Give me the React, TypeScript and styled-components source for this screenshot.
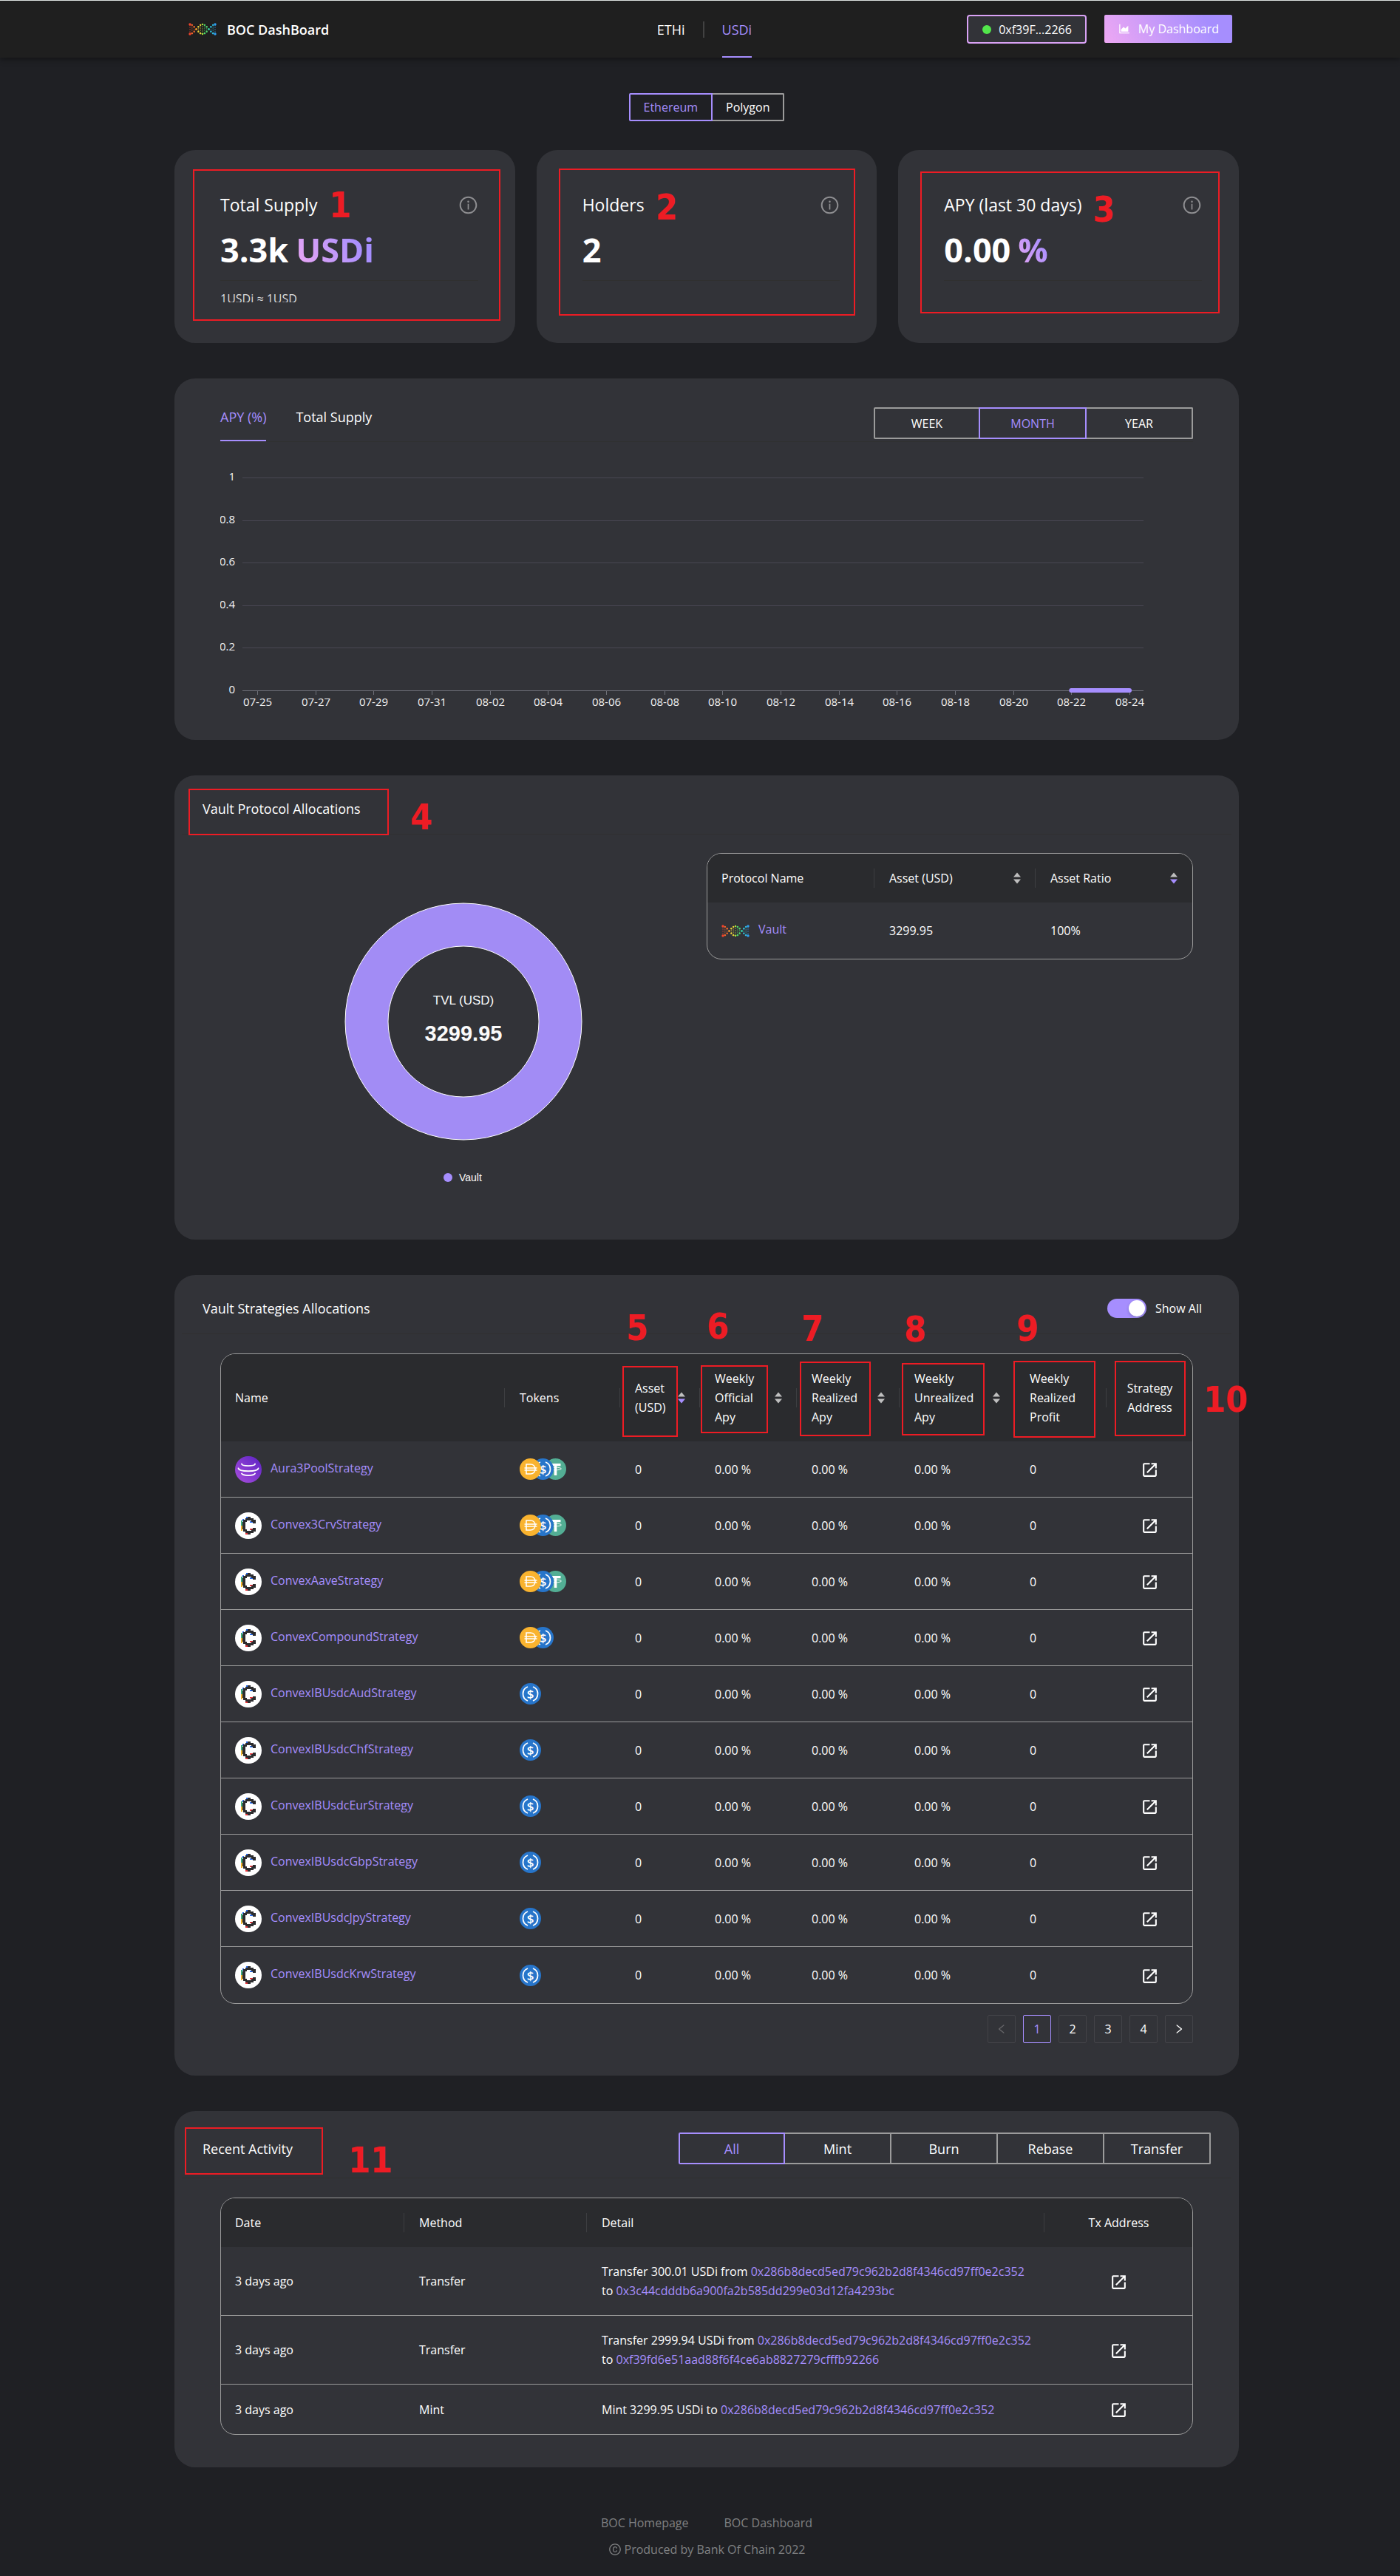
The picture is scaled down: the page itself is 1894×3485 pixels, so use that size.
import React from "react";
import styled, { createGlobalStyle, css } from "styled-components";
import {
  AiOutlineAreaChart,
  AiOutlineCopyright,
  AiOutlineInfoCircle,
  AiOutlineLeft,
  AiOutlineRight,
} from "react-icons/ai";
import { MdOpenInNew } from "react-icons/md";

const color = {
  page: "#1f2024",
  header: "#1f1f1f",
  panel: "#323338",
  tableHead: "#2a2b2e",
  rule: "#303030",
  line: "#9b9b9b",
  text: "#ffffff",
  muted: "#7f8082",
  accent: "#a68efe",
  pink: "#eea8f3",
  callout: "#ed1c24",
};

const GlobalStyle = createGlobalStyle`
  * { box-sizing: border-box; }
  body {
    margin: 0;
    background: ${color.page};
    color: ${color.text};
    font-family: "Open Sans", "Noto Sans", sans-serif;
    font-size: 16px;
    line-height: 26px;
  }
  a { color: inherit; text-decoration: none; }
  button { font: inherit; color: inherit; cursor: pointer; }
  h1, h2, p { margin: 0; font-weight: 400; }
`;

/* ---------- header ---------- */

const TopBar = styled.header`
  background: ${color.header};
  border-top: 1px solid #dde1e0;
  box-shadow: 0 2px 8px rgba(0, 0, 0, 0.45);
`;

const TopBarInner = styled.div`
  display: grid;
  grid-template-columns: 1fr auto 1fr;
  align-items: center;
  max-width: 1440px;
  height: 77px;
  margin: 0 auto;
  padding-left: 28px;
`;

const Brand = styled.a`
  display: flex;
  align-items: center;
  gap: 14px;
  font-size: 18px;
  font-weight: 600;
`;

const Nav = styled.nav`
  display: flex;
  align-items: center;
  height: 100%;
  padding-right: 16px;
  font-size: 18px;
`;

const NavLink = styled.a<{ $active?: boolean }>`
  display: flex;
  align-items: center;
  height: 100%;
  color: ${(p) => (p.$active ? color.accent : color.text)};
  border-top: 2px solid transparent;
  border-bottom: 2px solid ${(p) => (p.$active ? color.accent : "transparent")};
`;

const NavDivider = styled.span`
  width: 2px;
  height: 22px;
  margin: 0 24px;
  background: #424242;
`;

const TopActions = styled.div`
  display: flex;
  justify-content: flex-end;
  gap: 24px;
`;

const WalletButton = styled.button`
  display: flex;
  align-items: center;
  gap: 10px;
  height: 39px;
  padding: 0 18px 0 19px;
  border: 2px solid #d9a2f5;
  border-radius: 4px;
  background: ${color.panel};
`;

const OnlineDot = styled.span`
  width: 12px;
  height: 12px;
  border-radius: 50%;
  background: #52e64b;
`;

const DashboardButton = styled.button`
  display: flex;
  align-items: center;
  gap: 10px;
  height: 38px;
  padding: 0 18px;
  border: 0;
  border-radius: 2px;
  background: linear-gradient(60deg, ${color.pink}, ${color.accent} 80%);
`;

/* ---------- layout ---------- */

const Main = styled.main`
  padding-left: 18px;
`;

const Content = styled.div`
  display: flex;
  flex-direction: column;
  gap: 48px;
  max-width: 1440px;
  margin: 0 auto;
`;

const NetworkRow = styled.div`
  display: flex;
  justify-content: center;
  padding: 48px 0 39px;
`;

const Segments = styled.div`
  display: flex;
`;

const Segment = styled.button<{ $active?: boolean; $wide?: boolean }>`
  height: ${(p) => (p.$wide ? 43 : 38)}px;
  padding: 0 18px;
  ${(p) => p.$wide && "width: 144px;"}
  background: transparent;
  border: 2px solid ${color.line};
  border-left-width: 0;
  &:first-child {
    border-left-width: 2px;
    border-radius: 2px 0 0 2px;
  }
  &:last-child {
    border-radius: 0 2px 2px 0;
  }
  ${(p) =>
    p.$active &&
    css`
      color: ${color.accent};
      border-color: ${color.accent};
      &:not(:first-child) {
        box-shadow: -2px 0 0 ${color.accent};
      }
    `}
`;

const Panel = styled.section`
  position: relative;
  padding: 10px;
  border-radius: 28px;
  background: ${color.panel};
`;

const PanelHead = styled.div`
  display: flex;
  align-items: center;
  justify-content: space-between;
  min-height: 70px;
  padding: 19px 28px 18px;
  border-bottom: 1px solid ${color.rule};
  font-size: 18px;
`;

const PanelTitle = styled.h2`
  font-size: 18px;
`;

const PanelBody = styled.div`
  padding: 26px 52px 34px;
`;

/* ---------- stat cards ---------- */

const Stats = styled.div`
  display: grid;
  grid-template-columns: repeat(3, 1fr);
  gap: 29px;
`;

const StatCard = styled.section`
  position: relative;
  padding: 56px 50px 55px 62px;
  border-radius: 28px;
  background: ${color.panel};
`;

const StatHead = styled.div`
  display: flex;
  align-items: center;
  justify-content: space-between;
  line-height: 36px;
`;

const StatTitle = styled.h2`
  font-size: 23px;
`;

const InfoIcon = styled(AiOutlineInfoCircle)`
  width: 27px;
  height: 27px;
  color: #8f8f92;
`;

const StatValue = styled.p`
  display: flex;
  gap: 10px;
  padding: 12px 0 10px;
  border-bottom: 1px solid ${color.rule};
  font-size: 45px;
  font-weight: 700;
  line-height: 62px;
`;

const StatUnit = styled.span`
  color: transparent;
  background: linear-gradient(60deg, ${color.pink}, ${color.accent} 80%);
  background-clip: text;
`;

const StatNote = styled.p`
  height: 22px;
  margin-top: 7px;
  overflow: hidden;
  color: #dcdcdd;
  line-height: 34px;
`;

/* ---------- chart ---------- */

const ChartPanel = styled.section`
  padding: 39px 62px 37px;
  border-radius: 28px;
  background: ${color.panel};
`;

const ChartTabs = styled.div`
  display: flex;
  align-items: flex-start;
  gap: 40px;
  border-bottom: 1px solid ${color.rule};
  font-size: 18px;
`;

const ChartTab = styled.button<{ $active?: boolean }>`
  height: 46px;
  padding: 0 0 18px;
  border: 0;
  border-bottom: 2px solid ${(p) => (p.$active ? color.accent : "transparent")};
  background: transparent;
  color: ${(p) => (p.$active ? color.accent : color.text)};
`;

const PushRight = styled.div`
  margin-left: auto;
  font-size: 16px;
`;

const ChartSpace = styled.div`
  padding-top: 20px;
`;

const Drawing = styled.svg`
  display: block;
  width: 100%;
  height: auto;
`;

const AxisText = styled.text`
  font-size: 15px;
  fill: #f2f2f2;
`;

/* ---------- tables ---------- */

const TableFrame = styled.div`
  align-self: start;
  overflow: hidden;
  border: 1px solid ${color.line};
  border-radius: 20px;
`;

const Table = styled.table`
  width: 100%;
  table-layout: fixed;
  border-collapse: separate;
  border-spacing: 0;
`;

const HeadCell = styled.th<{ $center?: boolean }>`
  position: relative;
  padding: 20px 19px 20px 20px;
  background: ${color.tableHead};
  font-weight: 400;
  text-align: ${(p) => (p.$center ? "center" : "left")};
  &:first-child {
    padding-left: 19px;
  }
  &:not(:last-child)::after {
    content: "";
    position: absolute;
    top: calc(50% - 13px);
    right: 0;
    width: 1px;
    height: 26px;
    background: #3d3e41;
  }
`;

const HeadFlex = styled.div`
  display: flex;
  align-items: center;
  justify-content: space-between;
`;

const SortButton = styled.button`
  display: flex;
  padding: 0;
  border: 0;
  background: none;
`;

const Cell = styled.td<{ $center?: boolean }>`
  padding: 20px ${(p) => (p.$center ? 19 : 10)}px 20px 20px;
  border-bottom: 1px solid ${color.line};
  text-align: ${(p) => (p.$center ? "center" : "left")};
  &:first-child {
    padding-left: 19px;
  }
  tr:last-child > & {
    border-bottom: 0;
  }
`;

const TallRow = styled.tr`
  height: 76px;
  & > td {
    padding-top: 16px;
    padding-bottom: 16px;
  }
`;

const Named = styled.span`
  display: flex;
  align-items: center;
  gap: 12px;
`;

const NameLink = styled.a`
  padding-bottom: 4px;
  color: ${color.accent};
`;

const Address = styled.a`
  color: ${color.accent};
`;

const TokenStack = styled.span`
  display: flex;
  isolation: isolate;
  & > svg {
    position: relative;
  }
  & > svg + svg {
    margin-left: -12px;
  }
  & > svg:nth-child(1) {
    z-index: 3;
  }
  & > svg:nth-child(2) {
    z-index: 2;
  }
`;

const IconLink = styled.a`
  display: inline-flex;
  vertical-align: middle;
`;

const Allocation = styled.div`
  display: grid;
  grid-template-columns: 1fr 1fr;
  padding: 25px 52px 53px;
`;

const DonutBox = styled.figure`
  width: 340px;
  margin: 0 auto;
`;

const DonutText = styled.text<{ $size: number; $bold?: boolean }>`
  font-family: "Liberation Sans", sans-serif;
  font-size: ${(p) => p.$size}px;
  font-weight: ${(p) => (p.$bold ? 700 : 400)};
  fill: #fafafa;
`;

const SwitchLabel = styled.label`
  display: flex;
  align-items: center;
  gap: 12px;
  padding-right: 12px;
  font-size: 16px;
`;

const Switch = styled.input`
  appearance: none;
  position: relative;
  width: 53px;
  height: 26px;
  margin: 0;
  border-radius: 13px;
  background: #6b6b6f;
  &::before {
    content: "";
    position: absolute;
    top: 2px;
    left: 2px;
    width: 22px;
    height: 22px;
    border-radius: 50%;
    background: #ffffff;
    box-shadow: 0 2px 4px rgba(0, 35, 11, 0.2);
  }
  &:checked {
    background: ${color.accent};
  }
  &:checked::before {
    left: 29px;
  }
`;

const Pager = styled.nav`
  display: flex;
  justify-content: flex-end;
  gap: 10px;
  padding-top: 15px;
`;

const PageButton = styled.button<{ $active?: boolean }>`
  display: flex;
  align-items: center;
  justify-content: center;
  width: 38px;
  height: 38px;
  padding: 0;
  border: 1px solid ${(p) => (p.$active ? color.accent : "#434348")};
  border-radius: 2px;
  background: transparent;
  color: ${(p) => (p.$active ? color.accent : color.text)};
  &:disabled {
    color: #68686b;
  }
`;

const Footer = styled.footer`
  display: flex;
  flex-direction: column;
  align-items: center;
  gap: 10px;
  padding: 14px 0 24px;
  color: ${color.muted};
`;

const FooterLinks = styled.div`
  display: flex;
  gap: 48px;
`;

const Copyright = styled.p`
  display: flex;
  align-items: center;
  gap: 4px;
`;

/* ---------- callouts drawn over the panels ---------- */

const CalloutBox = styled.span<{ $x: number; $y: number; $w: number; $h: number }>`
  position: absolute;
  left: ${(p) => p.$x}px;
  top: ${(p) => p.$y}px;
  width: ${(p) => p.$w}px;
  height: ${(p) => p.$h}px;
  border: 2px solid ${color.callout};
  pointer-events: none;
`;

const CalloutNumber = styled.span<{ $x: number; $y: number }>`
  position: absolute;
  left: ${(p) => p.$x}px;
  top: ${(p) => p.$y}px;
  color: ${color.callout};
  font-family: "DejaVu Sans Condensed", "DejaVu Sans", sans-serif;
  font-size: 48px;
  font-weight: 700;
  line-height: 48px;
  pointer-events: none;
`;

type CalloutData = { n: number; box: [number, number, number, number]; at: [number, number] };

function Callout({ n, box, at }: CalloutData) {
  return (
    <>
      <CalloutBox $x={box[0]} $y={box[1]} $w={box[2]} $h={box[3]} />
      <CalloutNumber $x={at[0]} $y={at[1]}>
        {n}
      </CalloutNumber>
    </>
  );
}

/* ---------- drawings ---------- */

const helixColors = ["#f0432b", "#f2662b", "#f39a2e", "#e8d23a", "#a5e23c", "#4fd96b", "#35d3a8", "#2fc0e0", "#2f9df0"];

function HelixLogo() {
  const dots: React.ReactNode[] = [];
  const count = 13;
  for (let i = 0; i < count; i++) {
    const t = i / (count - 1);
    const x = 2 + t * 34;
    const dy = Math.cos(t * Math.PI * 2) * 6.5;
    const fill = helixColors[Math.round(t * 8)];
    const r = i === 0 || i === count - 1 ? 1.7 : 1.2;
    if (Math.abs(dy) > 3) {
      dots.push(
        <path key={"c" + i} d={`M${x} ${8.5 - dy}V${8.5 + dy}`} stroke={fill} strokeOpacity="0.6" strokeDasharray="2 1" />
      );
    }
    dots.push(<circle key={"a" + i} cx={x} cy={8.5 - dy} r={r} fill={fill} />);
    dots.push(<circle key={"b" + i} cx={x} cy={8.5 + dy} r={r} fill={fill} />);
  }
  return (
    <svg width="38" height="17" viewBox="0 0 38 17" aria-hidden="true">
      {dots}
    </svg>
  );
}

function AuraLogo() {
  return (
    <svg width="36" height="36" viewBox="0 0 36 36" aria-hidden="true">
      <defs>
        <linearGradient id="aura" x1="1" y1="0" x2="0" y2="1">
          <stop offset="0" stopColor="#5b22c4" />
          <stop offset="1" stopColor="#a94fdc" />
        </linearGradient>
      </defs>
      <circle cx="18" cy="18" r="18" fill="url(#aura)" />
      <g fill="none" stroke="#ffffff" strokeWidth="1.8" strokeLinecap="round">
        <path d="M9 10.5c0 3.4 18 3.4 18 0" />
        <path d="M4.500 16.500c1 5 26 5 27 0" />
        <path d="M9 23.500c2 3.400 16 3.400 18 0" />
      </g>
    </svg>
  );
}

function ConvexLogo() {
  return (
    <svg width="36" height="36" viewBox="0 0 36 36" aria-hidden="true">
      <circle cx="18" cy="18" r="18" fill="#ffffff" />
      <g fill="none" strokeWidth="2">
        <path d="M9 11v7" stroke="#3fae7d" />
        <path d="M9 18v7" stroke="#f2b52c" />
        <path d="M11 9v3M15 7h3" stroke="#2a6ff0" />
        <path d="M20 13h4" stroke="#2a6ff0" />
        <path d="M20 23h4M14 29h3" stroke="#e8383d" />
      </g>
      <path
        d="M14 8h3V6h4v2h4v2h3v5h-4v-2h-2v-2h-6v2h-2v10h2v2h6v-2h2v-2h4v5h-3v2h-4v2h-4v-2h-3v-2h-3v-3h-1V13h1v-3h3z"
        fill="#2c2c2e"
      />
    </svg>
  );
}

const CoinSign = styled.text`
  font-family: "Open Sans", sans-serif;
  font-size: 17px;
  font-weight: 600;
  fill: #ffffff;
`;

function Coin({ kind }: { kind: "dai" | "usdc" | "usdt" }) {
  const fill = { dai: "#f9b32f", usdc: "#2775ca", usdt: "#53ae94" }[kind];
  return (
    <svg width="29" height="29" viewBox="0 0 29 29" aria-hidden="true">
      <circle cx="14.500" cy="14.500" r="14.500" fill={fill} />
      {kind === "dai" && (
        <path
          d="M9 8h5.500c4 0 6.500 2.700 6.500 6.500S18.500 21 14.500 21H9zM6.500 13h17M6.500 16h17"
          fill="none"
          stroke="#ffffff"
          strokeWidth="1.600"
        />
      )}
      {kind === "usdc" && (
        <>
          <path
            d="M11 5a10.200 10.200 0 0 0 0 19M18 5a10.200 10.200 0 0 1 0 19"
            fill="none"
            stroke="#ffffff"
            strokeWidth="1.800"
          />
          <CoinSign x="14.500" y="20.500" textAnchor="middle">
            $
          </CoinSign>
        </>
      )}
      {kind === "usdt" && (
        <>
          <path d="M7.500 7h14v3.200h-5.200V23h-3.600V10.200H7.500z" fill="#ffffff" />
          <ellipse cx="14.500" cy="14" rx="8" ry="1.800" fill="none" stroke="#ffffff" strokeWidth="0.900" />
        </>
      )}
    </svg>
  );
}

function Sorter({ down, label }: { down?: boolean; label: string }) {
  return (
    <SortButton type="button" aria-label={"Sort by " + label}>
      <svg width="12" height="16" viewBox="0 0 12 16" aria-hidden="true">
        <path d="M6 0.500L11 6.500H1z" fill="#bfbfbf" />
        <path d="M6 15.500L11 9.500H1z" fill={down ? color.accent : "#bfbfbf"} />
      </svg>
    </SortButton>
  );
}

function OpenLink({ label }: { label: string }) {
  return (
    <IconLink href="#" aria-label={label}>
      <MdOpenInNew size={25} />
    </IconLink>
  );
}

/* ---------- data ---------- */

const days = [
  "07-25", "07-27", "07-29", "07-31", "08-02", "08-04", "08-06", "08-08",
  "08-10", "08-12", "08-14", "08-16", "08-18", "08-20", "08-22", "08-24",
];

type Token = "dai" | "usdc" | "usdt";
const strategies: { name: string; aura?: boolean; tokens: Token[] }[] = [
  { name: "Aura3PoolStrategy", aura: true, tokens: ["dai", "usdc", "usdt"] },
  { name: "Convex3CrvStrategy", tokens: ["dai", "usdc", "usdt"] },
  { name: "ConvexAaveStrategy", tokens: ["dai", "usdc", "usdt"] },
  { name: "ConvexCompoundStrategy", tokens: ["dai", "usdc"] },
  { name: "ConvexIBUsdcAudStrategy", tokens: ["usdc"] },
  { name: "ConvexIBUsdcChfStrategy", tokens: ["usdc"] },
  { name: "ConvexIBUsdcEurStrategy", tokens: ["usdc"] },
  { name: "ConvexIBUsdcGbpStrategy", tokens: ["usdc"] },
  { name: "ConvexIBUsdcJpyStrategy", tokens: ["usdc"] },
  { name: "ConvexIBUsdcKrwStrategy", tokens: ["usdc"] },
];

const strategyColumns: { title: string; width: number; sort?: boolean; down?: boolean; center?: boolean }[] = [
  { title: "Name", width: 384 },
  { title: "Tokens", width: 156 },
  { title: "Asset (USD)", width: 108, sort: true, down: true },
  { title: "Weekly Official Apy", width: 131, sort: true },
  { title: "Weekly Realized Apy", width: 139, sort: true },
  { title: "Weekly Unrealized Apy", width: 156, sort: true },
  { title: "Weekly Realized Profit", width: 124 },
  { title: "Strategy Address", width: 116, center: true },
];

const ALICE = "0x286b8decd5ed79c962b2d8f4346cd97ff0e2c352";
const activity = [
  { method: "Transfer", amount: "300.01", from: ALICE, to: "0x3c44cdddb6a900fa2b585dd299e03d12fa4293bc" },
  { method: "Transfer", amount: "2999.94", from: ALICE, to: "0xf39fd6e51aad88f6f4ce6ab8827279cfffb92266" },
  { method: "Mint", amount: "3299.95", from: "", to: ALICE },
];

const strategyCallouts: CalloutData[] = [
  { n: 5, box: [606, 123, 75, 96], at: [611, 47] },
  { n: 6, box: [712, 122, 91, 92], at: [720, 45] },
  { n: 7, box: [846, 117, 96, 101], at: [848, 48] },
  { n: 8, box: [984, 119, 112, 98], at: [987, 49] },
  { n: 9, box: [1135, 116, 111, 104], at: [1139, 48] },
  { n: 10, box: [1272, 116, 96, 102], at: [1392, 144] },
];

/* ---------- sections ---------- */

function ApyChart() {
  const step = 1180 / 15;
  return (
    <Drawing viewBox="0 0 1316 346" role="img" aria-label="APY over the last month">
      {["1", "0.8", "0.6", "0.4", "0.2", "0"].map((label, i) => {
        const y = Math.round(28 + i * 57.6) + 0.5;
        return (
          <g key={label}>
            <AxisText x="20" y={y + 3} textAnchor="end">
              {label}
            </AxisText>
            <path d={`M30 ${y}H1249`} stroke={label === "0" ? "#6e7079" : "#484753"} />
          </g>
        );
      })}
      {days.map((day, i) => {
        const x = Math.round(50 + i * step) + 0.5;
        return (
          <g key={day}>
            <path d={`M${x} 317v5`} stroke="#6e7079" />
            <AxisText x={x} y="337" textAnchor="middle">
              {day}
            </AxisText>
          </g>
        );
      })}
      <path d={`M${50 + step * 14} 316H${50 + step * 15}`} stroke={color.accent} strokeWidth="6" strokeLinecap="round" />
    </Drawing>
  );
}

function Donut() {
  return (
    <DonutBox>
      <Drawing viewBox="0 0 340 460" role="img" aria-label="TVL by protocol">
        <circle cx="170" cy="228" r="131" fill="none" stroke="#a28cf5" strokeWidth="58" />
        <circle cx="170" cy="228" r="160" fill="none" stroke="#ffffff" />
        <circle cx="170" cy="228" r="102" fill="none" stroke="#ffffff" />
        <DonutText $size={17} x="170" y="205" textAnchor="middle">
          TVL (USD)
        </DonutText>
        <DonutText $size={29} $bold x="170" y="254" textAnchor="middle">
          3299.95
        </DonutText>
        <circle cx="149" cy="439" r="6" fill={color.accent} />
        <DonutText $size={14} x="164" y="444">
          Vault
        </DonutText>
      </Drawing>
    </DonutBox>
  );
}

export default function App() {
  return (
    <>
      <GlobalStyle />
      <TopBar>
        <TopBarInner>
          <Brand href="#">
            <HelixLogo />
            BOC DashBoard
          </Brand>
          <Nav>
            <NavLink href="#">ETHi</NavLink>
            <NavDivider />
            <NavLink href="#" $active>
              USDi
            </NavLink>
          </Nav>
          <TopActions>
            <WalletButton type="button">
              <OnlineDot />
              0xf39F...2266
            </WalletButton>
            <DashboardButton type="button">
              <AiOutlineAreaChart size={18} />
              My Dashboard
            </DashboardButton>
          </TopActions>
        </TopBarInner>
      </TopBar>

      <Main>
        <NetworkRow>
          <Segments>
            <Segment type="button" $active aria-pressed>
              Ethereum
            </Segment>
            <Segment type="button">Polygon</Segment>
          </Segments>
        </NetworkRow>

        <Content>
          <Stats>
            <StatCard>
              <StatHead>
                <StatTitle>Total Supply</StatTitle>
                <InfoIcon />
              </StatHead>
              <StatValue>
                3.3k <StatUnit>USDi</StatUnit>
              </StatValue>
              <StatNote>1USDi ≈ 1USD</StatNote>
              <Callout n={1} box={[25, 26, 416, 205]} at={[209, 50]} />
            </StatCard>
            <StatCard>
              <StatHead>
                <StatTitle>Holders</StatTitle>
                <InfoIcon />
              </StatHead>
              <StatValue>2</StatValue>
              <StatNote />
              <Callout n={2} box={[30, 25, 401, 199]} at={[161, 53]} />
            </StatCard>
            <StatCard>
              <StatHead>
                <StatTitle>APY (last 30 days)</StatTitle>
                <InfoIcon />
              </StatHead>
              <StatValue>
                0.00 <StatUnit>%</StatUnit>
              </StatValue>
              <StatNote />
              <Callout n={3} box={[30, 29, 405, 192]} at={[263, 56]} />
            </StatCard>
          </Stats>

          <ChartPanel>
            <ChartTabs>
              <ChartTab type="button" $active>
                APY (%)
              </ChartTab>
              <ChartTab type="button">Total Supply</ChartTab>
              <PushRight>
                <Segments>
                  <Segment type="button" $wide>
                    WEEK
                  </Segment>
                  <Segment type="button" $wide $active aria-pressed>
                    MONTH
                  </Segment>
                  <Segment type="button" $wide>
                    YEAR
                  </Segment>
                </Segments>
              </PushRight>
            </ChartTabs>
            <ChartSpace>
              <ApyChart />
            </ChartSpace>
          </ChartPanel>

          <Panel>
            <PanelHead>
              <PanelTitle>Vault Protocol Allocations</PanelTitle>
            </PanelHead>
            <Allocation>
              <Donut />
              <TableFrame>
                <Table>
                  <colgroup>
                    <col width={226} />
                    <col width={218} />
                    <col width={212} />
                  </colgroup>
                  <thead>
                    <tr>
                      <HeadCell>Protocol Name</HeadCell>
                      <HeadCell>
                        <HeadFlex>
                          Asset (USD)
                          <Sorter label="asset" />
                        </HeadFlex>
                      </HeadCell>
                      <HeadCell>
                        <HeadFlex>
                          Asset Ratio
                          <Sorter label="ratio" down />
                        </HeadFlex>
                      </HeadCell>
                    </tr>
                  </thead>
                  <tbody>
                    <TallRow>
                      <Cell>
                        <Named>
                          <HelixLogo />
                          <NameLink href="#">Vault</NameLink>
                        </Named>
                      </Cell>
                      <Cell>3299.95</Cell>
                      <Cell>100%</Cell>
                    </TallRow>
                  </tbody>
                </Table>
              </TableFrame>
            </Allocation>
            <Callout n={4} box={[19, 18, 271, 63]} at={[319, 32]} />
          </Panel>

          <Panel>
            <PanelHead>
              <PanelTitle>Vault Strategies Allocations</PanelTitle>
              <SwitchLabel>
                <Switch type="checkbox" defaultChecked />
                Show All
              </SwitchLabel>
            </PanelHead>
            <PanelBody>
              <TableFrame>
                <Table>
                  <colgroup>
                    {strategyColumns.map((c) => (
                      <col key={c.title} width={c.width} />
                    ))}
                  </colgroup>
                  <thead>
                    <tr>
                      {strategyColumns.map((c) => (
                        <HeadCell key={c.title} $center={c.center}>
                          {c.sort ? (
                            <HeadFlex>
                              {c.title}
                              <Sorter label={c.title} down={c.down} />
                            </HeadFlex>
                          ) : (
                            c.title
                          )}
                        </HeadCell>
                      ))}
                    </tr>
                  </thead>
                  <tbody>
                    {strategies.map((s) => (
                      <TallRow key={s.name}>
                        <Cell>
                          <Named>
                            {s.aura ? <AuraLogo /> : <ConvexLogo />}
                            <NameLink href="#">{s.name}</NameLink>
                          </Named>
                        </Cell>
                        <Cell>
                          <TokenStack>
                            {s.tokens.map((t) => (
                              <Coin key={t} kind={t} />
                            ))}
                          </TokenStack>
                        </Cell>
                        <Cell>0</Cell>
                        <Cell>0.00 %</Cell>
                        <Cell>0.00 %</Cell>
                        <Cell>0.00 %</Cell>
                        <Cell>0</Cell>
                        <Cell $center>
                          <OpenLink label={s.name + " contract"} />
                        </Cell>
                      </TallRow>
                    ))}
                  </tbody>
                </Table>
              </TableFrame>
              <Pager aria-label="Pages">
                <PageButton type="button" disabled aria-label="Previous">
                  <AiOutlineLeft size={16} />
                </PageButton>
                {[1, 2, 3, 4].map((n) => (
                  <PageButton key={n} type="button" $active={n === 1}>
                    {n}
                  </PageButton>
                ))}
                <PageButton type="button" aria-label="Next">
                  <AiOutlineRight size={16} />
                </PageButton>
              </Pager>
            </PanelBody>
            {strategyCallouts.map((c) => (
              <Callout key={c.n} {...c} />
            ))}
          </Panel>

          <Panel>
            <PanelHead>
              <PanelTitle>Recent Activity</PanelTitle>
              <Segments>
                {["All", "Mint", "Burn", "Rebase", "Transfer"].map((t) => (
                  <Segment key={t} type="button" $wide $active={t === "All"}>
                    {t}
                  </Segment>
                ))}
              </Segments>
            </PanelHead>
            <PanelBody>
              <TableFrame>
                <Table>
                  <colgroup>
                    <col width={248} />
                    <col width={247} />
                    <col width={619} />
                    <col width={200} />
                  </colgroup>
                  <thead>
                    <tr>
                      <HeadCell>Date</HeadCell>
                      <HeadCell>Method</HeadCell>
                      <HeadCell>Detail</HeadCell>
                      <HeadCell $center>Tx Address</HeadCell>
                    </tr>
                  </thead>
                  <tbody>
                    {activity.map((a) => (
                      <tr key={a.amount}>
                        <Cell>3 days ago</Cell>
                        <Cell>{a.method}</Cell>
                        <Cell>
                          {a.method} {a.amount} USDi{" "}
                          {a.from && (
                            <>
                              from <Address href="#">{a.from}</Address>
                              <br />
                            </>
                          )}
                          to <Address href="#">{a.to}</Address>
                        </Cell>
                        <Cell $center>
                          <OpenLink label="Transaction" />
                        </Cell>
                      </tr>
                    ))}
                  </tbody>
                </Table>
              </TableFrame>
            </PanelBody>
            <Callout n={11} box={[14, 22, 187, 64]} at={[235, 42]} />
          </Panel>

          <Footer>
            <FooterLinks>
              <a href="#">BOC Homepage</a>
              <a href="#">BOC Dashboard</a>
            </FooterLinks>
            <Copyright>
              <AiOutlineCopyright size={18} />
              Produced by Bank Of Chain 2022
            </Copyright>
          </Footer>
        </Content>
      </Main>
    </>
  );
}
